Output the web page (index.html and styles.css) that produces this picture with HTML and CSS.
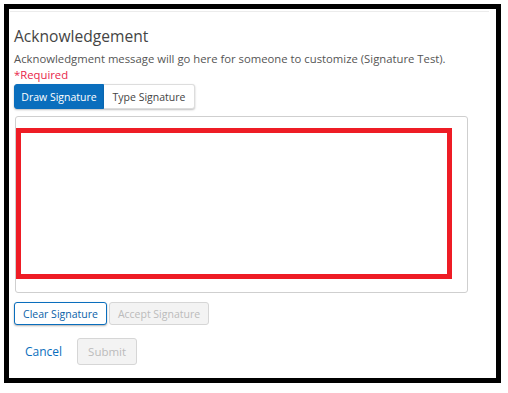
FILE: index.html
```html
<!DOCTYPE html>
<html lang="en">
<head>
  <meta charset="UTF-8" />
  <title>Acknowledgement</title>
  <link rel="stylesheet" href="styles.css">
</head>
<body>
  <div class="frame">
    <div class="modal">
      <h2 class="title">Acknowledgement</h2>
      <p class="message">Acknowledgment message will go here for someone to customize (Signature Test).</p>
      <p class="required">*Required</p>
      <div class="tabs">
        <button class="tab active">Draw Signature</button>
        <button class="tab">Type Signature</button>
      </div>
      <div class="sig-box">
        <div class="sig-pad"></div>
      </div>
      <div class="sig-actions">
        <button class="btn btn-outline">Clear Signature</button>
        <button class="btn btn-disabled" disabled>Accept Signature</button>
      </div>
      <div class="footer">
        <button class="btn-link">Cancel</button>
        <button class="btn btn-disabled btn-submit" disabled>Submit</button>
      </div>
    </div>
  </div>
</body>
</html>
```

FILE: styles.css
```css
* { margin: 0; padding: 0; box-sizing: border-box; }
body {
  font-family: "Open Sans", Arial, sans-serif;
  background: #fff;
  color: #444;
}
.frame {
  margin: 4px;
  width: 497px;
  height: 379px;
  border: 5px solid #000;
}
.modal {
  margin: 2px 7px 0 1px;
  border-top: 1px solid #ececec;
  padding: 0 4px;
}
.title {
  font-size: 15.6px;
  font-weight: 400;
  color: #444;
  margin-top: 13px;
  line-height: 22px;
}
.message {
  font-size: 11.3px;
  color: #555;
  margin-top: 4px;
  line-height: 16px;
}
.required {
  font-size: 11.3px;
  color: #e8264a;
  line-height: 16px;
}
.tabs {
  display: flex;
  margin-top: 1px;
}
.tab {
  font-family: inherit;
  font-size: 10.5px;
  height: 25px;
  border: 1px solid #ddd;
  background: #fff;
  color: #444;
  cursor: pointer;
  white-space: nowrap;
  box-shadow: 0 1px 2px rgba(0,0,0,0.25);
}
.tab:first-child { width: 90px; border-radius: 3px 0 0 3px; }
.tab:last-child { width: 91px; border-radius: 0 3px 3px 0; border-left: none; }
.tab.active {
  background: #0a6ebd;
  border-color: #0a6ebd;
  color: #fff;
}
.sig-box {
  margin: 7px 0 0 1px;
  width: 453px;
  height: 177px;
  border: 1px solid #cfcfcf;
  border-radius: 3px;
  padding-top: 11px;
}
.sig-pad {
  width: 436px;
  height: 151px;
  border: 5px solid #ee1c25;
}
.sig-actions {
  display: flex;
  gap: 2px;
  margin-top: 9px;
}
.btn {
  font-family: inherit;
  font-size: 10.5px;
  height: 23px;
  padding: 0;
  border-radius: 3px;
  background: #fff;
  white-space: nowrap;
  cursor: pointer;
}
.btn-outline {
  width: 93px;
  border: 1px solid #0a6ebd;
  color: #0a5fa8;
  box-shadow: 0 1px 2px rgba(0,0,0,0.3);
}
.btn-disabled {
  width: 100px;
  border: 1px solid #d6d6d6;
  background: #f3f3f3;
  color: #bbb;
  cursor: default;
}
.footer {
  display: flex;
  align-items: center;
  margin-top: 13px;
  gap: 15px;
}
.btn-link {
  font-family: inherit;
  font-size: 12px;
  border: none;
  background: none;
  color: #0a6ebd;
  padding: 0 0 0 11px;
  cursor: pointer;
}
.btn-submit {
  width: 60px;
  height: 27px;
  font-size: 11.5px;
}
```
